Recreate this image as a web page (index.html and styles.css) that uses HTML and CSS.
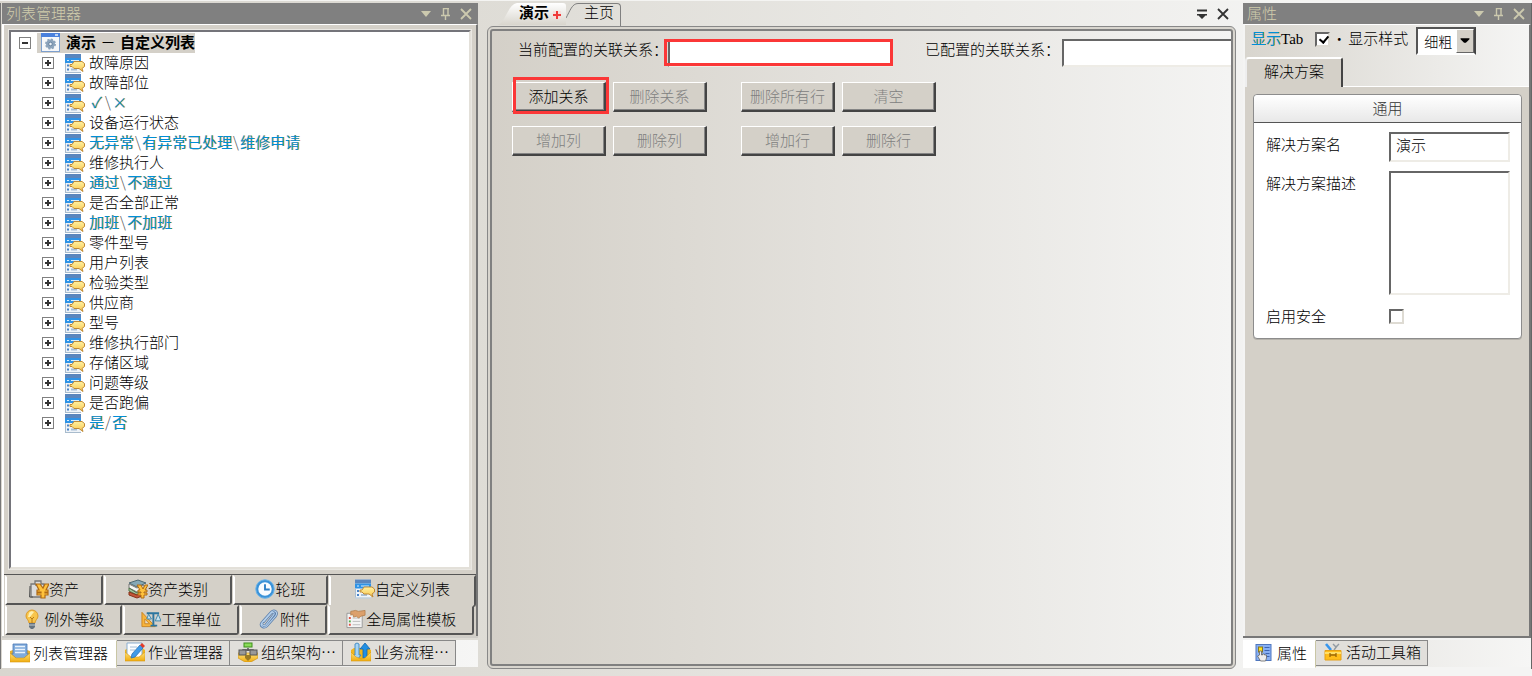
FILE: index.html
```html
<!DOCTYPE html>
<html lang="zh-CN">
<head>
<meta charset="utf-8">
<title>列表管理器</title>
<link rel="stylesheet" href="styles.css">
</head>
<body>
<svg class="defs" aria-hidden="true">
  <defs>
    <linearGradient id="gGold" x1="0" y1="0" x2="0" y2="1"><stop offset="0" stop-color="#fff0a0"/><stop offset="1" stop-color="#f8c850"/></linearGradient>
    <linearGradient id="gBag" x1="0" y1="0" x2="0" y2="1"><stop offset="0" stop-color="#ffe27a"/><stop offset="1" stop-color="#f0ac10"/></linearGradient>
  </defs>
  <symbol id="i-list" viewBox="0 0 20 19">
    <rect x="0" y="0" width="16" height="19" fill="#eef3f8"/>
    <rect x="0" y="0" width="16" height="4" fill="#5a86bd"/>
    <rect x="0" y="4" width="16" height="5" fill="#2f93e6"/>
    <path d="M2 6.500h2M6 6.500h8" stroke="#d9eefd" stroke-width="1"/>
    <path d="M2 11.500h2M2 15.500h2" stroke="#4a84c8" stroke-width="2"/>
    <path d="M6 11.500h3M6 15.500h6" stroke="#a9bfd6" stroke-width="2"/>
    <path d="M0 18.500h16M.5 9v9" stroke="#a9bccd" stroke-width="1"/>
    <path d="M9 7.500h8l2.500 2v3L17 14.500l1 3-4-3H9l-2-2H5v-2h2z" fill="url(#gGold)" stroke="#c08a35" stroke-width="1"/>
  </symbol>
  <symbol id="i-gear" viewBox="0 0 19 19">
    <rect x=".5" y=".5" width="18" height="18" fill="#f6f7f9" stroke="#7da0cf"/>
    <rect x="0" y="0" width="19" height="4" fill="#4a80dc"/>
    <rect x="14" y="1" width="3" height="2" fill="#bcd3f5"/>
    <circle cx="9.500" cy="11" r="4.500" fill="#8ca3bb" stroke="#8ca3bb" stroke-width="2" stroke-dasharray="2 1.500"/>
    <circle cx="9.500" cy="11" r="1.800" fill="#eef2f6" stroke="#6783a0"/>
  </symbol>
  <symbol id="i-asset" viewBox="0 0 20 20">
    <path d="M2 5h4V2h6v3h3v13H2z" fill="#dcdcdc" stroke="#777" stroke-width="1.300"/>
    <path d="M1 7l-.500 11H4M6 6h6" fill="none" stroke="#555"/>
    <path d="M7 5h4l3 4 2-4h4l-3 6h2v2h-3v1h3v2h-3v3h-4v-3H8v-2h4v-1H8v-2h2z" fill="#ffc23c" stroke="#b06a14" stroke-width="1.200"/>
  </symbol>
  <symbol id="i-cat" viewBox="0 0 20 20">
    <path d="M1 4l9-3 8 3-9 4z" fill="#86a8b6" stroke="#4d6873"/>
    <path d="M1 5v4l8 4 7-3V6L9 9z" fill="#f7f7f3" stroke="#777"/>
    <path d="M1 9v3l8 4 6-3v-2l-6 3z" fill="#a8c59f" stroke="#4f7349"/>
    <path d="M1 13v3l8 3 5-2v-3l-5 2z" fill="#c5563a" stroke="#873319"/>
    <path d="M9 6h4l2 4 2-4h3l-3 5h2v2h-3v1h3v2h-3v3h-3v-3h-3v-2h3v-1h-3v-2h2z" fill="#ffc23c" stroke="#b06a14"/>
  </symbol>
  <symbol id="i-clock" viewBox="0 0 19 19">
    <circle cx="9.500" cy="9.500" r="7.700" fill="#f7fbff" stroke="#3a92d8" stroke-width="2.600"/>
    <circle cx="9.500" cy="9.500" r="8.800" fill="none" stroke="#7dbdec" stroke-width=".8"/>
    <path d="M9.500 5v5H14" fill="none" stroke="#2e7fc6" stroke-width="1.800"/>
  </symbol>
  <symbol id="i-bulb" viewBox="0 0 14 20">
    <path d="M7 1a6 6 0 0 1 6 6c0 3-3 4-3 7H4c0-3-3-4-3-7a6 6 0 0 1 6-6z" fill="#f8c54c" stroke="#dc9b28"/>
    <path d="M4 4c1-2 4-2 5-1L5 8H3z" fill="#fff0b0"/>
    <path d="M5 8l2 2 2-2M7 10v4" fill="none" stroke="#b87b15"/>
    <path d="M4 14h6v4l-2 2H6l-2-2z" fill="#65737f"/><path d="M4 16h6" stroke="#c3cbd2"/>
  </symbol>
  <symbol id="i-unit" viewBox="0 0 21 18">
    <path d="M1 2v15h14z" fill="#f8b43a" stroke="#c98524"/><path d="M4 9v5h5z" fill="#e7ddc8" stroke="#c98524"/>
    <path d="M6 3h13M13 2v13M10 16h7" stroke="#2b759f" stroke-width="2"/>
    <path d="M8 4l-2 5h5zM18 4l-3 7h6z" fill="#c8e3ef" stroke="#3b86ad"/>
  </symbol>
  <symbol id="i-clip" viewBox="0 0 18 19">
    <path d="M5 12l7-8c2-2 4 0 2 2l-7 9c-2 2-5 0-3-3l8-9c3-3 7 0 4 4l-8 9c-3 3-7 0-5-3" fill="none" stroke="#5b7eaa" stroke-width="2.400" stroke-linecap="round"/>
    <path d="M5 12l7-8c2-2 4 0 2 2l-7 9c-2 2-5 0-3-3l8-9c3-3 7 0 4 4l-8 9c-3 3-7 0-5-3" fill="none" stroke="#b4cfeb" stroke-width="1" stroke-linecap="round"/>
  </symbol>
  <symbol id="i-tpl" viewBox="0 0 21 20">
    <path d="M1 4h16v15H1z" fill="#f4f4f4" stroke="#999"/>
    <path d="M3 9h2M3 16h2" stroke="#e05040" stroke-width="2"/><path d="M3 12.500h2" stroke="#4fae4b" stroke-width="2"/>
    <path d="M7 9h8M7 12.500h8M7 16h8" stroke="#bbb"/>
    <path d="M5 2l5-1 3 1 7-1v5l-4 1-3 2-2-2-3 1-1-3-2 1z" fill="#dca06c" stroke="#b07a48" stroke-width=".8"/>
  </symbol>
  <symbol id="i-mgr" viewBox="0 0 20 20">
    <path d="M0 8l3-1h14l3 1v11H0z" fill="#e9b02c"/>
    <path d="M3 1h14v10h2l-6 5H7l-6-5h2z" fill="#7fabdc" stroke="#4b7ab5" stroke-width=".8"/>
    <path d="M5 3.500h10M5 6.500h10M5 9.500h10" stroke="#eaf3fc" stroke-width="1.600"/>
    <path d="M0 10l6 5h8l6-5v9H0z" fill="url(#gBag)" stroke="#d79711" stroke-width=".6"/>
  </symbol>
  <symbol id="i-job" viewBox="0 0 20 20">
    <path d="M0 8l3-2h14l3 2v11H0z" fill="#f2b61d"/>
    <path d="M2 1h15v12l-3 3H6l-4-3z" fill="#fbfdff" stroke="#8badcf"/><path d="M5 5h7M5 8h5" stroke="#a4bdd6"/>
    <path d="M0 10l6 5h8l6-5v9H0z" fill="url(#gBag)" stroke="#d79711" stroke-width=".6"/>
    <path d="M6 16l1-4 8-9 3 3-8 9z" fill="#3f9ae9" stroke="#2a72b5" stroke-width=".8"/><path d="M15 3l2-2 3 3-2 2z" fill="#e63c28"/>
  </symbol>
  <symbol id="i-org" viewBox="0 0 20 20">
    <path d="M0 11h20v5l-7 4H7l-7-4z" fill="url(#gBag)" stroke="#c78b12" stroke-width=".6"/>
    <path d="M10 6v3M5 10V8h10v2" stroke="#555" stroke-width="1.500" fill="none"/>
    <rect x="6" y="1" width="8" height="4" fill="#8bdc5a" stroke="#3f8f1c"/>
    <rect x="1" y="8" width="7" height="5" fill="#999" stroke="#555"/><rect x="12" y="8" width="7" height="5" fill="#999" stroke="#555"/>
    <path d="M7 13h6v3l-3 3-3-3z" fill="#9a7a24"/>
  </symbol>
  <symbol id="i-flow" viewBox="0 0 20 20">
    <path d="M0 8l3-2h14l3 2v11H0z" fill="#f2b61d"/>
    <path d="M4 2l2-1 2 1v11h2l-4 5-4-5h2z" fill="#a5d4f4" stroke="#3a86c2" stroke-width=".9"/>
    <path d="M14 1l5 6h-3v9h-4V7H9z" fill="#218fe3" stroke="#1464a8" stroke-width=".8"/>
    <path d="M0 10l5 5 5 2 4-1 6-6v9H0z" fill="url(#gBag)" stroke="#d79711" stroke-width=".6"/>
  </symbol>
  <symbol id="i-prop" viewBox="0 0 17 18">
    <rect x=".5" y=".5" width="15" height="16" fill="#88b0f3" stroke="#4f77bf"/>
    <rect x="3" y="3" width="4" height="5" fill="#ffe21b" stroke="#887722"/>
    <path d="M9 3.500h5M9 6.500h5M10 9.500h4M11 12.500h3" stroke="#3d65b2"/>
    <path d="M5 17l-3-5 2-1V7h2v4h1v-1h2v1h2v3l-1 3z" fill="#eee" stroke="#666" stroke-width=".8"/>
  </symbol>
  <symbol id="i-tool" viewBox="0 0 18 18">
    <path d="M2 1l5 6" stroke="#3796ee" stroke-width="2.600"/><path d="M10 7l3-4M9 1l3 3 3-3" fill="none" stroke="#929ba3" stroke-width="1.400"/>
    <path d="M1 7.500h16V17H1z" fill="#ffbd1b" stroke="#e5a017"/><path d="M1 10h16" stroke="#ffdf69" stroke-width="2"/>
    <path d="M6 10v4M12 10v4M6 12h6" fill="none" stroke="#9c6809" stroke-width="1.300"/>
  </symbol>
  <symbol id="i-down" viewBox="0 0 12 12"><path d="M1 3h10L6 9z" fill="currentColor"/></symbol>
  <symbol id="i-pin" viewBox="0 0 12 12"><path d="M3.500 0v7.500M3 .500h6M8 0v7.500M1 7.500h9M5.500 8v4" fill="none" stroke="currentColor" stroke-width="1.400"/></symbol>
  <symbol id="i-x" viewBox="0 0 12 12"><path d="M1 1l10 10M11 1L1 11" stroke="currentColor" stroke-width="1.800"/></symbol>
  <symbol id="i-menu" viewBox="0 0 12 12"><path d="M1 2.500h10" stroke="currentColor" stroke-width="2"/><path d="M1 6h10v1.500H9.500L6 11 2.500 7.500H1z" fill="currentColor"/></symbol>
</svg>

<div class="app">
  <aside class="dock dock-left">
    <header class="dock-title">
      <h2>列表管理器</h2>
      <button aria-label="菜单"><svg><use href="#i-down"/></svg></button>
      <button aria-label="固定"><svg><use href="#i-pin"/></svg></button>
      <button aria-label="关闭"><svg><use href="#i-x"/></svg></button>
    </header>
    <div class="dock-body">
      <div class="tree">
        <div class="root">
          <button class="exp minus" aria-label="折叠"></button>
          <span class="root-label"><svg class="gear"><use href="#i-gear"/></svg><b>演示<span class="dash">－</span>自定义列表</b></span>
        </div>
        <ul>
          <li><button class="exp" aria-label="展开"></button><svg><use href="#i-list"/></svg><span>故障原因</span></li>
          <li><button class="exp" aria-label="展开"></button><svg><use href="#i-list"/></svg><span>故障部位</span></li>
          <li><button class="exp" aria-label="展开"></button><svg><use href="#i-list"/></svg><span class="tint"><em>✓</em><i>\</i><em>×</em></span></li>
          <li><button class="exp" aria-label="展开"></button><svg><use href="#i-list"/></svg><span>设备运行状态</span></li>
          <li><button class="exp" aria-label="展开"></button><svg><use href="#i-list"/></svg><span class="tint">无异常<i>\</i>有异常已处理<i>\</i>维修申请</span></li>
          <li><button class="exp" aria-label="展开"></button><svg><use href="#i-list"/></svg><span>维修执行人</span></li>
          <li><button class="exp" aria-label="展开"></button><svg><use href="#i-list"/></svg><span class="tint">通过<i>\</i>不通过</span></li>
          <li><button class="exp" aria-label="展开"></button><svg><use href="#i-list"/></svg><span>是否全部正常</span></li>
          <li><button class="exp" aria-label="展开"></button><svg><use href="#i-list"/></svg><span class="tint">加班<i>\</i>不加班</span></li>
          <li><button class="exp" aria-label="展开"></button><svg><use href="#i-list"/></svg><span>零件型号</span></li>
          <li><button class="exp" aria-label="展开"></button><svg><use href="#i-list"/></svg><span>用户列表</span></li>
          <li><button class="exp" aria-label="展开"></button><svg><use href="#i-list"/></svg><span>检验类型</span></li>
          <li><button class="exp" aria-label="展开"></button><svg><use href="#i-list"/></svg><span>供应商</span></li>
          <li><button class="exp" aria-label="展开"></button><svg><use href="#i-list"/></svg><span>型号</span></li>
          <li><button class="exp" aria-label="展开"></button><svg><use href="#i-list"/></svg><span>维修执行部门</span></li>
          <li><button class="exp" aria-label="展开"></button><svg><use href="#i-list"/></svg><span>存储区域</span></li>
          <li><button class="exp" aria-label="展开"></button><svg><use href="#i-list"/></svg><span>问题等级</span></li>
          <li><button class="exp" aria-label="展开"></button><svg><use href="#i-list"/></svg><span>是否跑偏</span></li>
          <li><button class="exp" aria-label="展开"></button><svg><use href="#i-list"/></svg><span class="tint">是<i>/</i>否</span></li>
        </ul>
      </div>
      <nav class="cats">
        <div class="cat-row first">
          <button><svg><use href="#i-asset"/></svg>资产</button>
          <button><svg><use href="#i-cat"/></svg>资产类别</button>
          <button><svg><use href="#i-clock"/></svg>轮班</button>
          <button class="on"><svg><use href="#i-list"/></svg>自定义列表</button>
        </div>
        <div class="cat-row second">
          <button><svg class="wide"><use href="#i-bulb"/></svg>例外等级</button>
          <button><svg><use href="#i-unit"/></svg>工程单位</button>
          <button><svg class="wide"><use href="#i-clip"/></svg>附件</button>
          <button><svg><use href="#i-tpl"/></svg>全局属性模板</button>
        </div>
      </nav>
    </div>
    <nav class="dock-tabs">
      <button class="on"><svg><use href="#i-mgr"/></svg>列表管理器</button>
      <button><svg><use href="#i-job"/></svg>作业管理器</button>
      <button><svg><use href="#i-org"/></svg>组织架构…</button>
      <button><svg><use href="#i-flow"/></svg>业务流程…</button>
    </nav>
  </aside>

  <main class="doc">
    <div class="doc-tabs">
      <svg class="tab-edge" viewBox="0 0 22 22" preserveAspectRatio="none"><defs><linearGradient id="gTab" x1="0" y1="0" x2="0" y2="1"><stop offset="0" stop-color="#fff"/><stop offset="1" stop-color="#d8d5cd"/></linearGradient></defs><path d="M0 22C9 20 10 2 20 0h2v22z" fill="url(#gTab)"/></svg>
      <button class="doc-tab on">演示<svg class="plus" viewBox="0 0 8 8"><rect width="8" height="8" fill="#f7dcda"/><path d="M4 0v8M0 4h8" stroke="#ef3a3a" stroke-width="2"/></svg></button>
      <svg class="tab-curve" viewBox="0 0 12 22"><path d="M0 15C4 8 6 .5 12 .5" fill="none" stroke="#808080"/></svg>
      <button class="doc-tab home">主页</button>
      <span class="grow"></span>
      <button class="tool" aria-label="窗口列表"><svg><use href="#i-menu"/></svg></button>
      <button class="tool" aria-label="关闭"><svg><use href="#i-x"/></svg></button>
    </div>
    <div class="frame"><div class="canvas">
      <div class="fields">
        <label for="cur">当前配置的关联关系：</label>
        <span class="marked field-mark"><input id="cur" type="text"></span>
        <label class="second-label" for="done">已配置的关联关系：</label>
        <input id="done" class="cut" type="text">
      </div>
      <div class="actions">
        <div class="pair">
          <span class="marked button-mark"><button>添加关系</button></span>
          <button disabled>删除关系</button>
          <button disabled>增加列</button>
          <button disabled>删除列</button>
        </div>
        <div class="pair">
          <button disabled>删除所有行</button>
          <button disabled>清空</button>
          <button disabled>增加行</button>
          <button disabled>删除行</button>
        </div>
      </div>
    </div></div>
  </main>

  <aside class="dock dock-right">
    <header class="dock-title">
      <h2>属性</h2>
      <button aria-label="菜单"><svg><use href="#i-down"/></svg></button>
      <button aria-label="固定"><svg><use href="#i-pin"/></svg></button>
      <button aria-label="关闭"><svg><use href="#i-x"/></svg></button>
    </header>
    <div class="dock-body">
      <div class="options">
        <label for="tab"><span class="tint">显示</span><span class="latin">Tab</span></label>
        <input id="tab" type="checkbox" checked>
        <span class="dot">·</span>
        <label for="style">显示样式</label>
        <span class="combo"><select id="style"><option>细粗</option></select><svg viewBox="0 0 18 24"><path d="M4 9h10v1l-4 4H8L4 10z"/></svg></span>
      </div>
      <div class="sheet-tabs"><button>解决方案</button></div>
      <div class="sheet">
        <section class="card">
          <h3>通用</h3>
          <div class="form">
            <label for="name">解决方案名</label><input id="name" type="text" value="演示">
            <label for="desc">解决方案描述</label><textarea id="desc"></textarea>
            <label for="safe">启用安全</label><input id="safe" type="checkbox">
          </div>
        </section>
      </div>
    </div>
    <nav class="dock-tabs">
      <button class="on"><svg><use href="#i-prop"/></svg>属性</button>
      <button><svg><use href="#i-tool"/></svg>活动工具箱</button>
    </nav>
  </aside>
</div>
</body>
</html>
```

FILE: styles.css
```css
* { box-sizing: border-box; }
body, button, input, select, textarea {
  font-family: "Noto Sans CJK SC", sans-serif;
  font-size: 15px;
  font-weight: 300;
  line-height: 20px;
  color: #000;
}
body { margin: 0; }
button { padding: 0; border: 0; background: none; white-space: nowrap; }
h2, h3, ul { margin: 0; padding: 0; font-size: 15px; font-weight: 300; }
svg { flex: none; }
.defs { position: absolute; width: 0; height: 0; }
.grow { flex: 1; }

.app {
  display: grid;
  grid-template-columns: 478px minmax(0, 1fr) 289px;
  min-height: 100vh;
  padding: 2px 0 7px;
  background: linear-gradient(90deg, #d9d6cf 0%, #dfddd7 35%, #f4f4f3 85%);
  border-top: 1px solid #f4f4f2;
}

/* docked side panels */
.dock { display: flex; flex-direction: column; min-width: 0; }
.dock-left { padding-left: 1px; border-left: 1px solid #777; }
.dock-right { border-right: 1px solid #666; }
.dock-title {
  display: flex;
  align-items: center;
  height: 21px;
  padding: 0 6px 0 4px;
  gap: 8px;
  background: #808080;
}
.dock-title h2 { flex: 1; padding-bottom: 2px; color: #d0ccac; }
.dock-title button { display: flex; color: #ccc9ae; }
.dock-title svg { width: 12px; height: 12px; }
.dock-body {
  flex: 1;
  display: flex;
  flex-direction: column;
  background: #d4d0c8;
  border-top: 1px solid #fff;
  border-right: 2px solid #777;
}
.dock-left .dock-body { border-left: 2px solid #fff; }

/* list tree */
.tree {
  flex: 1;
  margin: 5px 5px 5px 5px;
  border: 2px solid;
  border-color: #74747a #e3e0d9 #e3e0d9 #74747a;
  background: #fff;
  outline: 1px solid #e9e7e2;
}
.root { display: flex; align-items: center; height: 21px; padding-left: 8px; gap: 6px; }
.root-label { display: flex; align-items: center; height: 20px; padding-left: 4px; gap: 6px; background: #d4d0c8; }
.root-label b { font-weight: 700; padding-bottom: 2px; }
.gear { width: 19px; height: 19px; }
.dash { display: inline-block; width: 24px; text-align: center; font-weight: 400; }
.tree ul { list-style: none; }
.tree li { display: flex; align-items: center; height: 20px; padding-left: 31px; }
.tree li span { padding-bottom: 2px; }
.tree li svg { width: 20px; height: 19px; margin: 0 4px 0 11px; }
.exp {
  width: 12px;
  height: 12px;
  flex: none;
  border: 1px solid #808080;
  background: linear-gradient(#333, #333) center / 6px 2px no-repeat, linear-gradient(#333, #333) center / 2px 6px no-repeat, #fff;
}
.exp.minus { background: linear-gradient(#333, #333) center / 6px 2px no-repeat, #fff; }
.tint { color: #008ed8; font-weight: 400; text-shadow: 1px 0 #f0aa3c; }
.tint i, .tint em { display: inline-block; width: 8px; text-align: center; font-style: normal; }
.tint i { color: #555; font-weight: 300; text-shadow: none; }
.tint em { width: 15px; }

/* category buttons */
.cats { border-top: 1px solid #555; padding: 0 0 1px 1px; }
.cat-row { display: grid; }
.cat-row.first { grid-template-columns: 99fr 129fr 96fr 147fr; }
.cat-row.second { grid-template-columns: 118fr 118fr 88fr 147fr; padding-right: 1px; }
.cat-row button {
  display: flex;
  align-items: center;
  justify-content: center;
  height: 30px;
  margin-right: 1px;
  padding-bottom: 3px;
  border: 2px solid;
  border-color: #d4d0c8 #555 #555 #fff;
  border-radius: 0 0 3px 1px;
}
.cat-row button.on { height: 32px; margin: 0 0 -2px; padding-bottom: 5px; background: #d4d0c8; }
.cat-row svg { width: 20px; height: 20px; }
.cat-row svg.wide { margin-right: 2px; }

/* tabs under a dock */
.dock-tabs {
  display: flex;
  height: 33px;
  padding: 2px 0;
  border-top: 2px solid #777;
  background: linear-gradient(90deg, #e0ded9, #f6f6f5);
  background-clip: content-box;
}
.dock-left .dock-tabs { border-top-color: #cfcdc8; }
.dock-tabs button {
  display: flex;
  align-items: center;
  height: 26px;
  padding: 0 6px 2px 8px;
  gap: 3px;
  border: 1px solid #888;
  border-left-width: 0;
  background: #e1dfdb;
}
.dock-tabs button.on { height: 28px; padding: 0 8px 2px 8px; background: #fff; border-color: #fff #c9c6a5 #fff #fff; }
.dock-tabs svg { width: 20px; height: 20px; }
.dock-right .dock-tabs svg { width: 18px; height: 18px; }
.dock-right .dock-tabs button { gap: 4px; }
.dock-right .dock-tabs button.on { padding-left: 12px; }

/* document area */
.doc { display: flex; flex-direction: column; min-width: 0; padding: 0 7px 0 9px; }
.doc-tabs { display: flex; align-items: flex-start; height: 23px; padding: 0 3px 0 10px; }
.tab-edge { width: 22px; height: 22px; }
.doc-tab { display: flex; align-items: center; height: 22px; padding-bottom: 5px; }
.doc-tab.on { font-weight: 700; padding: 0 5px 5px 0; background: linear-gradient(#fff, #d8d5cd); gap: 4px; border-radius: 0 3px 0 0; }
.plus { width: 8px; height: 8px; margin-top: 6px; }
.tab-curve { width: 12px; height: 22px; }
.doc-tab.home { height: 23px; padding: 0 6px 6px; border: 1px solid #808080; border-width: 1px 1px 0 0; border-radius: 0 4px 0 0; }
.tool { display: flex; width: 21px; height: 22px; align-items: center; justify-content: center; color: #333; }
.tool svg { width: 12px; height: 12px; }
.frame { flex: 1; display: flex; padding: 2px; border: 1px solid #888; border-radius: 6px; background: #d8d5ce; }
.canvas {
  flex: 1;
  min-width: 0;
  overflow: hidden;
  padding: 8px 0 0 20px;
  border: 2px solid #808080;
  border-radius: 3px;
  background: linear-gradient(90deg, #d4d0c8, #f4f4f3);
}
.fields { display: flex; align-items: flex-start; height: 43px; padding-left: 6px; white-space: nowrap; }
.fields label { width: 150px; flex: none; }
.fields label.second-label { width: 137px; margin-left: 32px; }
.fields input { width: 225px; height: 28px; flex: none; }
input[type="text"], textarea {
  display: block;
  margin: 0;
  padding: 0 5px;
  background: #fff;
  border: 2px solid;
  border-color: #666 #eeece6 #eeece6 #666;
  border-radius: 0;
}
.marked { position: relative; display: block; }
.marked::after { content: ""; position: absolute; border: 3px solid #fb3737; pointer-events: none; }
.field-mark::after { inset: 0 0 1px -4px; }
.button-mark::after { inset: -5px -3px -2px 1px; }
.actions { display: flex; gap: 34px; }
.pair { display: grid; grid-template-columns: 94px 94px; gap: 14px 7px; }
.pair button {
  width: 94px;
  height: 30px;
  padding-bottom: 2px;
  background: #d4d0c8;
  border: 1px solid;
  border-color: #fff #444 #444 #fff;
  border-right-width: 2px;
  border-bottom-width: 2px;
  box-shadow: inset -1px -1px #858585;
}
.pair button:disabled { color: #808080; }

/* properties */
.dock-right .dock-body { border-left: 2px solid #f4f4f3; }
.options {
  display: flex;
  align-items: center;
  height: 32px;
  padding: 0 0 4px 6px;
  background: linear-gradient(90deg, #d8d5ce, #f5f5f4);
}
.options label { padding-bottom: 2px; }
.latin { font-family: "Liberation Serif", serif; }
input[type="checkbox"] {
  appearance: none;
  width: 15px;
  height: 15px;
  margin: 0;
  border: 2px solid;
  border-color: #666 #dedbd3 #dedbd3 #666;
  background: #fff;
}
.options input { margin-left: 12px; }
input[type="checkbox"]:checked::after { content: ""; display: block; width: 4px; height: 7px; margin: 0 0 0 4px; border: solid #000; border-width: 0 2px 2px 0; rotate: 40deg; }
.dot { width: 18px; text-align: center; }
.combo { position: relative; margin: 4px 0 0 8px; z-index: 1; }
.combo select {
  appearance: none;
  display: block;
  width: 60px;
  height: 28px;
  padding: 0 20px 0 6px;
  border: 2px solid;
  border-color: #555 #444 #fff #555;
  border-radius: 0;
  background: #fff;
  font-size: 14px;
}
.combo svg { position: absolute; right: 2px; top: 2px; width: 18px; height: 24px; background: #d4d0c8; border: 1px solid; border-color: #fff #666 #666 #fff; pointer-events: none; }
.sheet-tabs { display: flex; height: 30px; background: linear-gradient(90deg, #d8d5ce, #f5f5f4); border-bottom: 1px solid #fff; }
.sheet-tabs button { width: 98px; height: 30px; padding-bottom: 4px; background: #d4d0c8; border: 2px solid; border-color: #fff #444 #d4d0c8 #eee; border-bottom: 0; border-radius: 4px 3px 0 0; }
.sheet { padding: 7px 7px 0 8px; }
.card { border: 1px solid #8c8c8c; border-radius: 4px; background: #fff; box-shadow: 0 1px #b5b2ab; }
.card h3 { height: 28px; line-height: 26px; text-align: center; color: #333; border-bottom: 1px solid #555; background: linear-gradient(#fff, #e8e8e8); border-radius: 4px 4px 0 0; }
.form { display: grid; grid-template-columns: 123px 1fr; row-gap: 9px; padding: 9px 11px 12px 12px; }
.form label { padding-top: 2px; }
.form input[type="text"] { width: 100%; height: 30px; padding-bottom: 5px; }
.form textarea { width: 100%; height: 124px; resize: none; }
.form input[type="checkbox"] { margin-top: 5px; }
```
